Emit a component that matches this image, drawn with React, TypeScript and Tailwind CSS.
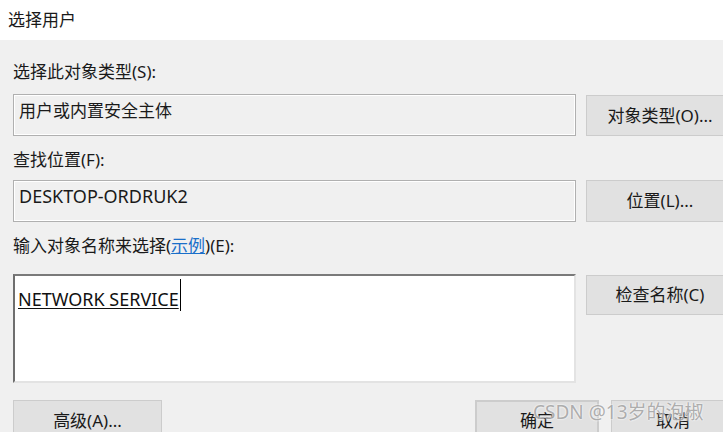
import React from "react";

const font = {
  fontFamily: '"Noto Sans", "Noto Sans CJK SC", sans-serif',
};

function Btn({
  children,
  className = "",
}: {
  children: React.ReactNode;
  className?: string;
}) {
  return (
    <div
      className={`flex shrink-0 items-center justify-center border border-[#cccccc] bg-[#e1e1e1] text-[17px] leading-[24px] text-[#1a1a1a] ${className}`}
    >
      {children}
    </div>
  );
}

export default function App() {
  return (
    <div
      className="relative h-[432px] w-[723px] overflow-hidden bg-[#f0f0f0]"
      style={font}
    >
      {/* title bar */}
      <div className="flex h-[40px] items-center bg-white pl-[8px] text-[17px] text-[#1a1a1a]">
        选择用户
      </div>

      <div className="flex flex-col pl-[13px] pt-[20px]">
        <div className="text-[17px] leading-[24px] text-[#1a1a1a]">
          选择此对象类型(S):
        </div>
        <div className="mt-[10px] flex gap-[10px]">
          <div className="h-[42px] w-[563px] shrink-0 border border-[#b0b0b0] bg-[#f0f0f0] pl-[5px] pt-[4px] text-[17px] leading-[24px] text-[#1a1a1a] shadow-[inset_0_0_0_1px_#ffffff]">
            用户或内置安全主体
          </div>
          <Btn className="mt-[1px] h-[41px] w-[148px]">对象类型(O)...</Btn>
        </div>

        <div className="mt-[12px] text-[17px] leading-[24px] text-[#1a1a1a]">
          查找位置(F):
        </div>
        <div className="mt-[8px] flex gap-[10px]">
          <div className="h-[42px] w-[563px] shrink-0 border border-[#b0b0b0] bg-[#f0f0f0] pl-[5px] pt-[3px] text-[18px] leading-[24px] text-[#1a1a1a] shadow-[inset_0_0_0_1px_#ffffff]">
            DESKTOP-ORDRUK2
          </div>
          <Btn className="h-[42px] w-[148px]">位置(L)...</Btn>
        </div>

        <div className="mt-[12px] text-[17px] leading-[24px] text-[#1a1a1a]">
          输入对象名称来选择(
          <span className="text-[#1a6fc9] underline">示例</span>)(E):
        </div>
        <div className="mt-[16px] flex gap-[10px]">
          <div className="flex h-[109px] w-[563px] shrink-0 items-start border-2 border-b-[#e3e3e3] border-l-[#6e6e6e] border-r-[#e3e3e3] border-t-[#7a7a7a] bg-white pl-[3px] text-[18px] leading-[24px] text-[#111111]">
            <span className="mt-[11px] underline underline-offset-2">
              NETWORK SERVICE
            </span>
            <span className="ml-[1px] mt-[3px] h-[32px] w-[1px] bg-black" />
          </div>
          <Btn className="mt-[1px] h-[40px] w-[148px]">检查名称(C)</Btn>
        </div>

        <div className="mt-[17px] flex">
          <Btn className="h-[42px] w-[149px]">高级(A)...</Btn>
          <Btn className="ml-[313px] h-[42px] w-[124px] border-2 border-[#3c8fdc]">
            确定
          </Btn>
          <Btn className="ml-[12px] h-[42px] w-[124px]">取消</Btn>
        </div>
      </div>

      {/* watermark */}
      <div
        className="absolute left-[533px] top-[399px] text-[19px] leading-[26px] text-[#a8a8a8] opacity-90"
        style={{ textShadow: "0 0 2px #ffffff, 0 0 2px #ffffff" }}
      >
        CSDN @13岁的泡椒
      </div>
    </div>
  );
}
